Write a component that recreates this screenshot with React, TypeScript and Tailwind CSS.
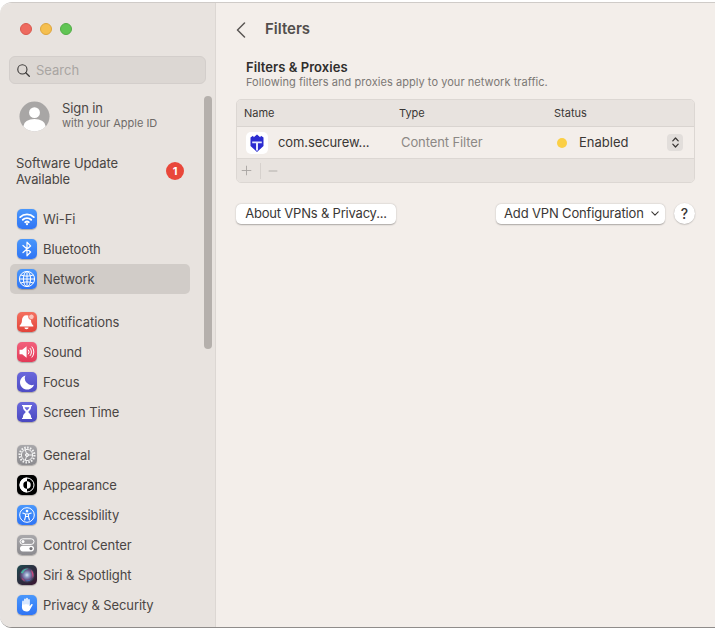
import React from "react";

function IconBox({ bg, children }: { bg: string; children: React.ReactNode }) {
  return (
    <div className={`w-[20px] h-[20px] rounded-[5px] shrink-0 flex items-center justify-center shadow-[0_0.5px_1px_rgba(0,0,0,0.25)] ${bg}`}>
      <svg viewBox="0 0 20 20" className="w-[20px] h-[20px]">{children}</svg>
    </div>
  );
}

const blue = "bg-linear-to-b from-[#4a97fb] to-[#2f74f5]";
const gray = "bg-linear-to-b from-[#a9a8ab] to-[#8c8b8f]";

const WifiIcon = () => (
  <IconBox bg={blue}>
    <g fill="none" stroke="#fff" strokeWidth="1.9" strokeLinecap="round">
      <path d="M3.2 8.1a9.8 9.8 0 0 1 13.6 0" />
      <path d="M5.8 10.8a6.1 6.1 0 0 1 8.4 0" />
      <path d="M8.2 13.2a2.7 2.7 0 0 1 3.6 0" />
    </g>
    <circle cx="10" cy="15.2" r="1.1" fill="#fff" />
  </IconBox>
);
const BtIcon = () => (
  <IconBox bg={blue}>
    <path d="M6 6.500 13.600 13 10 16.800V3.200L13.600 7 6 13.500" fill="none" stroke="#fff" strokeWidth="1.200" strokeLinejoin="round" strokeLinecap="round" />
  </IconBox>
);
const NetIcon = () => (
  <IconBox bg={blue}>
    <g fill="none" stroke="#fff" strokeWidth="1">
      <circle cx="10" cy="10" r="7.6" />
      <ellipse cx="10" cy="10" rx="3.600" ry="7.6" />
      <path d="M10 2.400v15.200M2.400 10h15.200M3.800 6c3.800 1.500 8.600 1.500 12.400 0M3.800 14c3.800-1.500 8.600-1.500 12.400 0" />
    </g>
  </IconBox>
);
const BellIcon = () => (
  <IconBox bg="bg-linear-to-b from-[#f4705f] to-[#e2433a]">
    <path d="M9.500 3.200c-2.800 0-4.500 2.100-4.500 4.900 0 2.900-.9 4.200-2.300 5.500v1h13.600v-1c-1.400-1.300-2.300-2.600-2.300-5.500 0-2.800-1.600-4.900-4.500-4.900Z" fill="#fff" />
    <path d="M7.400 15.400h4.200a2.100 1.800 0 0 1-4.200 0Z" fill="#fff" />
    <circle cx="14.400" cy="4.800" r="2.800" fill="#fbc4bb" stroke="#ee5c4f" strokeWidth="0.8" />
  </IconBox>
);
const SoundIcon = () => (
  <IconBox bg="bg-linear-to-b from-[#f2607c] to-[#e23a58]">
    <path d="M2.500 7.800h2.700L9.600 4.300v11.400L5.200 12.200H2.500Z" fill="#fff" />
    <g fill="none" stroke="#fff" strokeWidth="1" strokeLinecap="round">
      <path d="M11.400 8a3 3 0 0 1 0 4" />
      <path d="M13.200 6.400a5.400 5.400 0 0 1 0 7.200" />
      <path d="M15 4.800a7.800 7.800 0 0 1 0 10.400" />
    </g>
  </IconBox>
);
const FocusIcon = () => (
  <IconBox bg="bg-linear-to-b from-[#6a68dc] to-[#4f4cc4]">
    <path d="M8.400 3.400a7.200 7.200 0 1 0 8.600 9.400A7 7 0 0 1 8.400 3.400Z" fill="#fff" />
  </IconBox>
);
const TimeIcon = () => (
  <IconBox bg="bg-linear-to-b from-[#6a68dc] to-[#4a48c0]">
    <path d="M5 3h10v1.300h-1v1.400c0 1.800-1.800 3-2.800 4.300 1 1.300 2.800 2.500 2.800 4.300v1.400h1V17H5v-1.300h1v-1.400c0-1.800 1.800-3 2.800-4.300C7.800 8.700 6 7.500 6 5.700V4.300H5Z" fill="#fff" />
    <path d="M7.600 5.200h4.800c-.3 1.300-1.500 2.200-2.400 3.200-.9-1-2.100-1.900-2.400-3.200Z" fill="#6a68dc" />
  </IconBox>
);
const GeneralIcon = () => (
  <IconBox bg={gray}>
    <g fill="none" stroke="#f4f4f4">
      <circle cx="10" cy="10" r="7.400" strokeWidth="2.200" strokeDasharray="1.500 1.400" />
      <circle cx="10" cy="10" r="5.600" strokeWidth="1" />
      <path d="M8.300 4.800 10 10l-1.700 5.200M10 10h5.400" strokeWidth="1" />
      <circle cx="10" cy="10" r="1.600" strokeWidth="1" />
    </g>
  </IconBox>
);
const AppearanceIcon = () => (
  <IconBox bg="bg-black">
    <circle cx="10" cy="10" r="7" fill="none" stroke="#fff" strokeWidth="1" />
    <path d="M10 2.500a7.500 7.500 0 0 0 0 15Z" fill="#fff" />
    <path d="M10 6.300a3.700 3.700 0 0 0 0 7.400Z" fill="#000" />
    <path d="M10 6.300a3.700 3.700 0 0 1 0 7.400Z" fill="#fff" />
  </IconBox>
);
const AccessIcon = () => (
  <IconBox bg={blue}>
    <circle cx="10" cy="10" r="7.300" fill="none" stroke="#fff" strokeWidth="1" />
    <circle cx="10" cy="6.100" r="1.300" fill="#fff" />
    <path d="M5.800 8.100 8.500 9v2.600L7.600 15M14.200 8.100 11.500 9v2.600l.9 3.400M8.500 9h3M8.800 11.500h2.400" fill="none" stroke="#fff" strokeWidth="1.100" strokeLinecap="round" strokeLinejoin="round" />
  </IconBox>
);
const ControlIcon = () => (
  <IconBox bg={gray}>
    <rect x="3" y="3.800" width="14" height="5.600" rx="2.800" fill="none" stroke="#fff" strokeWidth="1" />
    <circle cx="6" cy="6.600" r="1.500" fill="#fff" />
    <rect x="3" y="10.800" width="14" height="5.600" rx="2.800" fill="#fff" />
    <circle cx="14" cy="13.600" r="1.600" fill="#77767a" />
  </IconBox>
);
const SiriIcon = () => (
  <div className="w-[20px] h-[20px] rounded-[5px] shrink-0 overflow-hidden shadow-[0_0.5px_1px_rgba(0,0,0,0.25)]">
    <svg viewBox="0 0 20 20" className="w-[20px] h-[20px]">
      <defs>
        <radialGradient id="s1" cx="50%" cy="50%" r="50%">
          <stop offset="0%" stopColor="#dfe4f2" />
          <stop offset="28%" stopColor="#8fa3c8" />
          <stop offset="60%" stopColor="#6d5a8e" />
          <stop offset="100%" stopColor="#2a2f3e" />
        </radialGradient>
        <linearGradient id="s0" x1="0" y1="0" x2="1" y2="1">
          <stop offset="0%" stopColor="#1f4a4f" />
          <stop offset="100%" stopColor="#3a1330" />
        </linearGradient>
      </defs>
      <rect width="20" height="20" fill="url(#s0)" />
      <circle cx="10" cy="10" r="8" fill="url(#s1)" />
      <path d="M3.800 8a6.600 6.600 0 0 1 8-4.200c-2.400.2-4.800 1.800-5.800 4.600Z" fill="#45c4a8" opacity="0.85" />
      <path d="M14 4.800a6.600 6.600 0 0 1 1.800 8.400c-.3-2.600-1-5.400-1.800-8.400Z" fill="#e0487e" opacity="0.85" />
      <path d="M4.200 12.500a6.600 6.600 0 0 0 3.800 4c-.6-1.400-1.600-2.900-3.800-4Z" fill="#d6447a" opacity="0.85" />
      <path d="M8 15.800a6.600 6.600 0 0 0 6.500-1.500c-2 .8-4.200 1.300-6.500 1.500Z" fill="#3d7fd6" opacity="0.8" />
    </svg>
  </div>
);
const HandIcon = () => (
  <IconBox bg={blue}>
    <path d="M5.300 6.400c0-1.100 1.500-1.100 1.500 0v3h.4V4.300c0-1.200 1.600-1.200 1.600 0v5h.4V3.600c0-1.200 1.600-1.200 1.600 0v5.800h.4V4.800c0-1.100 1.500-1.100 1.500 0v6.500c.5-.8 1-1.700 1.600-2.100.9-.6 1.800.2 1.200 1.100-.9 1.400-1.700 3.200-2.700 4.600-.8 1-2 1.600-3.600 1.600-2.800 0-4.300-1.700-4.300-4.400Z" fill="#fff" />
  </IconBox>
);

function Row({ icon, label, active }: { icon: React.ReactNode; label: string; active?: boolean }) {
  return (
    <div className={`h-[30px] ml-[10px] w-[180px] pl-[7px] flex items-center gap-[6px] rounded-[5px] ${active ? "bg-[#d1ccc8]" : ""}`}>
      {icon}
      <span className="pt-[1px] text-[13px] text-[#4a4644] tracking-[-0.1px]">{label}</span>
    </div>
  );
}

function Sidebar() {
  return (
    <aside className="relative w-[216px] shrink-0 bg-[#e8e3df] border-r border-[#dcd7d3] overflow-hidden">
      <div className="flex gap-[8px] pl-[20px] pt-[20px]">
        <div className="w-[12px] h-[12px] rounded-full bg-[#ee6a5f] border border-[#d9584e]" />
        <div className="w-[12px] h-[12px] rounded-full bg-[#f5bf4f] border border-[#dea63c]" />
        <div className="w-[12px] h-[12px] rounded-full bg-[#61c554] border border-[#52ad46]" />
      </div>
      <div className="mt-[21px] ml-[9px] w-[197px] h-[28px] rounded-[6px] bg-[#dcd7d3] border border-[#d3cecb] flex items-center pl-[6px] gap-[5px]">
        <svg viewBox="0 0 16 16" className="w-[15px] h-[15px]">
          <circle cx="6.800" cy="6.800" r="4.900" fill="none" stroke="#3c3a39" strokeWidth="1.200" />
          <path d="M10.400 10.400 14.200 14.200" stroke="#3c3a39" strokeWidth="1.400" strokeLinecap="round" />
        </svg>
        <span className="pt-[1px] text-[13px] text-[#a9a5a2]">Search</span>
      </div>
      <div className="mt-[16px] ml-[19px] flex items-center gap-[12px]">
        <svg viewBox="0 0 32 32" className="w-[31px] h-[31px]">
          <defs>
            <clipPath id="av"><circle cx="16" cy="16" r="15.500" /></clipPath>
          </defs>
          <circle cx="16" cy="16" r="15.500" fill="#a8a6a5" />
          <g clipPath="url(#av)" fill="#fff">
            <circle cx="16" cy="12" r="5.600" />
            <ellipse cx="16" cy="26" rx="11.500" ry="7.500" />
          </g>
        </svg>
        <div className="flex flex-col pb-[2px]">
          <span className="text-[13px] leading-[16px] text-[#4a4644] tracking-[-0.1px]">Sign in</span>
          <span className="text-[11px] leading-[14px] text-[#6f6b69]">with your Apple ID</span>
        </div>
      </div>
      <div className="mt-[23px] ml-[16px] w-[174px] flex items-center justify-between pr-[6px]">
        <span className="text-[13px] leading-[16px] text-[#4a4644] w-[120px] tracking-[-0.1px]">Software Update Available</span>
        <span className="w-[18px] h-[18px] rounded-full bg-[#e9473a] text-white text-[11px] font-bold flex items-center justify-center">1</span>
      </div>
      <div className="mt-[17px]">
        <Row icon={<WifiIcon />} label="Wi-Fi" />
        <Row icon={<BtIcon />} label="Bluetooth" />
        <Row icon={<NetIcon />} label="Network" active />
      </div>
      <div className="mt-[13px]">
        <Row icon={<BellIcon />} label="Notifications" />
        <Row icon={<SoundIcon />} label="Sound" />
        <Row icon={<FocusIcon />} label="Focus" />
        <Row icon={<TimeIcon />} label="Screen Time" />
      </div>
      <div className="mt-[13px]">
        <Row icon={<GeneralIcon />} label="General" />
        <Row icon={<AppearanceIcon />} label="Appearance" />
        <Row icon={<AccessIcon />} label="Accessibility" />
        <Row icon={<ControlIcon />} label="Control Center" />
        <Row icon={<SiriIcon />} label="Siri & Spotlight" />
        <Row icon={<HandIcon />} label="Privacy & Security" />
      </div>
      <div className="absolute left-[204px] top-[93px] w-[8px] h-[253px] rounded-full bg-[#b5b0ac]" />
    </aside>
  );
}

function Main() {
  return (
    <main className="flex-1 bg-[#f3eeea] pl-[20px] pr-[20px]">
      <div className="flex items-center h-[53px]">
        <svg viewBox="0 0 10 16" className="w-[10px] h-[16px]">
          <path d="M8.500 1 1.500 8l7 7" fill="none" stroke="#5a5654" strokeWidth="1.500" strokeLinecap="round" strokeLinejoin="round" />
        </svg>
        <span className="ml-[19px] text-[15px] font-semibold text-[#524e4c]">Filters</span>
      </div>
      <div className="mt-[3px] ml-[10px]">
        <div className="text-[13px] leading-[16px] font-semibold text-[#2f2d2c] tracking-[0.05px]">Filters &amp; Proxies</div>
        <div className="text-[11px] leading-[14px] text-[#7c7875] tracking-[0.05px]">Following filters and proxies apply to your network traffic.</div>
      </div>
      <div className="mt-[10px] w-[459px] rounded-[5px] border border-[#dcd7d3] overflow-hidden">
        <div className="h-[27px] bg-[#e8e3df] border-b border-[#d9d4d0] flex items-center text-[11px] text-[#3a3735]">
          <span className="pl-[7px] w-[162px]">Name</span>
          <span className="w-[155px]">Type</span>
          <span>Status</span>
        </div>
        <div className="h-[32px] bg-[#f3eeea] border-b border-[#dcd7d3] flex items-center">
          <div className="ml-[9px] w-[22px] h-[22px] rounded-[5px] bg-white flex items-center justify-center">
            <svg viewBox="0 0 22 22" className="w-[22px] h-[22px]">
              <path d="M4.500 5.500 7 3.800l.8 1.400L11 2.500l3.200 2.700.8-1.400 2.500 1.700v8.500L11 20 4.500 14Z" fill="#2b2bd0" />
              <path d="M6.200 9.500h9.600v1.800h-3.800v7.200h-2v-7.200H6.200Z" fill="#e4e7ff" />
            </svg>
          </div>
          <span className="pt-[1px] ml-[10px] w-[123px] text-[13px] text-[#3a3735] tracking-[-0.1px]">com.securew...</span>
          <span className="pt-[1px] w-[156px] text-[13px] text-[#8c8885] tracking-[-0.1px]">Content Filter</span>
          <span className="w-[10px] h-[10px] rounded-full bg-[#fbcf45]" />
          <span className="ml-[12px] w-[88px] text-[13px] text-[#3a3735]">Enabled</span>
          <div className="w-[16px] h-[17px] rounded-[4px] bg-[#e2dedb] flex items-center justify-center">
            <svg viewBox="0 0 10 14" className="w-[9px] h-[13px]">
              <path d="M2 5.200 5 2l3 3.200M2 8.800 5 12l3-3.200" fill="none" stroke="#3a3735" strokeWidth="1.400" strokeLinecap="round" strokeLinejoin="round" />
            </svg>
          </div>
        </div>
        <div className="h-[23px] bg-[#e8e3df] flex items-center">
          <div className="w-[24px] h-[16px] pl-[4px] border-r border-[#d6d1cd] flex items-center">
            <svg viewBox="0 0 12 12" className="w-[11px] h-[11px]"><path d="M6 .8v10.400M.8 6h10.400" stroke="#a8a4a1" strokeWidth="1" /></svg>
          </div>
          <div className="w-[24px] flex items-center justify-center">
            <svg viewBox="0 0 12 12" className="w-[10px] h-[10px]"><path d="M.8 6h10.400" stroke="#a8a4a1" strokeWidth="1" /></svg>
          </div>
        </div>
      </div>
      <div className="mt-[20px] w-[459px] flex items-center justify-between">
        <button className="h-[20px] w-[160px] rounded-[5px] bg-white text-[13px] text-[#3a3735] tracking-[-0.2px] shadow-[0_0.5px_1.5px_rgba(0,0,0,0.3)]">About VPNs &amp; Privacy...</button>
        <div className="flex items-center gap-[9px]">
          <button className="h-[20px] w-[169px] rounded-[5px] bg-white text-[13px] text-[#3a3735] tracking-[-0.15px] shadow-[0_0.5px_1.5px_rgba(0,0,0,0.3)] flex items-center pl-[8px] gap-[7px]">
            <span>Add VPN Configuration</span>
            <svg viewBox="0 0 10 6" className="w-[8px] h-[5px]"><path d="M1 1l4 4 4-4" fill="none" stroke="#3a3735" strokeWidth="1.300" strokeLinecap="round" strokeLinejoin="round" /></svg>
          </button>
          <button className="w-[21px] h-[21px] rounded-full bg-white text-[14px] font-medium text-[#3a3735] shadow-[0_0.5px_1.5px_rgba(0,0,0,0.3)] flex items-center justify-center">?</button>
        </div>
      </div>
    </main>
  );
}

export default function App() {
  return (
    <div className="w-[715px] h-[630px] bg-white overflow-hidden pt-[2px] font-['Inter','Liberation_Sans',sans-serif] antialiased">
      <div className="h-[626px] flex rounded-tl-[12px] rounded-bl-[12px] overflow-hidden border-t border-b border-t-[#cfcbc8] border-b-[#8f8c8a]">
        <Sidebar />
        <Main />
      </div>
    </div>
  );
}
